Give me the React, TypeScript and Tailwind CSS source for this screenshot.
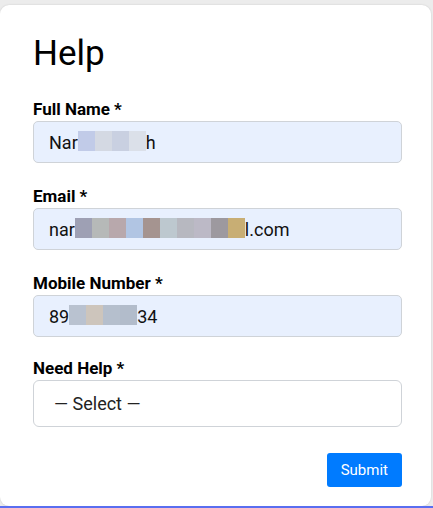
import { type FC, type ReactNode } from 'react'

const Mosaic: FC<{ colors: string[] }> = ({ colors }) => (
  <span className="inline-flex align-middle -mt-[3px]">
    {colors.map((c, i) => (
      <span key={i} className="inline-block h-[20px] w-[17px]" style={{ backgroundColor: c }} />
    ))}
  </span>
)

const Field: FC<{ label: string; last?: boolean; children: ReactNode }> = ({ label, last, children }) => (
  <div className={last ? 'mb-[19px]' : 'mb-[21px]'}>
    <div className="text-[17px] font-bold leading-[24px] text-black">{label}</div>
    <div className="h-[42px] rounded-[5px] border border-[#cfd3d8] bg-[#e8f0fe] px-[15px] flex items-center text-[18px] text-[#111]">
      {children}
    </div>
  </div>
)

export default function App() {
  return (
    <div className="h-[508px] w-[433px] overflow-hidden bg-[#ececec] font-['Roboto',sans-serif]">
      <div className="mt-[5px] mr-[2px] h-[501px] rounded-[9px] bg-white pl-[33px] pr-[29px] pt-[28px] shadow-[0_0_2px_rgba(0,0,0,0.15)]">
        <h1 className="text-[35px] font-normal leading-[42px] text-black mb-[22px]">Help</h1>

        <Field label="Full Name *">
          <span>Nar</span>
          <Mosaic colors={['#c1cbe8', '#d4d9e3', '#c9d0e1', '#dbe0e9']} />
          <span>h</span>
        </Field>

        <Field label="Email *">
          <span>nar</span>
          <Mosaic colors={['#9ea0b4', '#b6b9b8', '#b8a8ac', '#b1c5e3', '#a59490', '#bdc8cf', '#b7b8c0', '#bcb9c6', '#9d999f', '#c8ae74']} />
          <span>l.com</span>
        </Field>

        <Field label="Mobile Number *" last>
          <span>89</span>
          <Mosaic colors={['#b9c2d0', '#cdc5bc', '#b5bfcd', '#b2bccb']} />
          <span>34</span>
        </Field>

        <div>
          <div className="text-[17px] font-bold leading-[24px] text-black">Need Help *</div>
          <div className="h-[47px] rounded-[6px] border border-[#cfd3d8] bg-white pl-[20px] flex items-center text-[18px] text-[#222]">
            — Select —
          </div>
        </div>

        <div className="mt-[26px] flex justify-end">
          <button className="h-[34px] rounded-[3px] bg-[#007bff] px-[14px] text-[15px] text-white">Submit</button>
        </div>
      </div>
      <div className="h-[2px] bg-[#5a6ef0]" />
    </div>
  )
}
